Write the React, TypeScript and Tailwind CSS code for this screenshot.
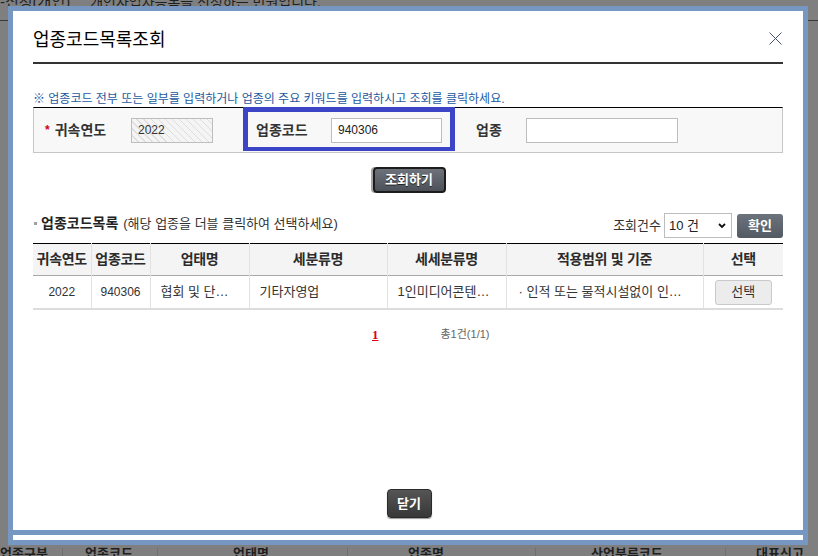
import { useState } from "react";

const font = "font-['Liberation_Sans','Noto_Sans_CJK_KR',sans-serif]";

const columns = [
  { label: "귀속연도", width: 58 },
  { label: "업종코드", width: 59 },
  { label: "업태명", width: 99 },
  { label: "세분류명", width: 138 },
  { label: "세세분류명", width: 119 },
  { label: "적용범위 및 기준", width: 197 },
  { label: "선택", width: 80 },
];

const rows = [
  {
    year: "2022",
    code: "940306",
    bizType: "협회 및 단…",
    subClass: "기타자영업",
    detailClass: "1인미디어콘텐…",
    scope: "· 인적 또는 물적시설없이 인…",
  },
];

function CloseIcon() {
  return (
    <svg width="13" height="13" viewBox="0 0 13 13" className="block">
      <path d="M0.5 0.5L12.5 12.5M12.5 0.5L0.5 12.5" stroke="#4a5070" strokeWidth="1" fill="none" />
    </svg>
  );
}

function BackgroundPage() {
  return (
    <div className="h-full w-full bg-[#7f7f7f] text-[#1f1f1f]">
      <div className="flex h-[21px] items-start gap-5 border-b border-[#3a3a3a] text-[15px] leading-[10px]">
        <span className="-mt-[3px]">-신청(개인)</span>
        <span className="-mt-[3px] text-[14px]">개인사업자등록을 신청하는 민원입니다.</span>
      </div>
      <div className="mt-[527px] flex text-[13px] leading-[12px] font-bold">
        <span className="w-[63px] border-r border-[#6f6f6f]">업종구분</span>
        <span className="w-[95px] border-r border-[#6f6f6f] pl-[22px]">업종코드</span>
        <span className="w-[190px] border-r border-[#6f6f6f] pl-[75px]">업태명</span>
        <span className="w-[188px] border-r border-[#6f6f6f] pl-[60px]">업종명</span>
        <span className="w-[190px] border-r border-[#6f6f6f] pl-[55px]">산업분류코드</span>
        <span className="pl-[30px]">대표신고</span>
      </div>
    </div>
  );
}

export default function App() {
  const [count, setCount] = useState("10");
  const [code, setCode] = useState("940306");
  const [bizName, setBizName] = useState("");

  return (
    <div className={`relative h-[556px] w-[818px] overflow-hidden ${font}`}>
      <BackgroundPage />

      <div className="absolute left-[8px] top-[6px] w-[800px] border-[5px] border-[#7597c1] bg-white">
        <div className="flex h-[519px] flex-col px-[20px]">
          {/* header */}
          <div className="flex items-start justify-between border-b-2 border-[#333] pt-[17px] pb-[10px]">
            <h1 className="text-[18px] leading-[24px] text-black">업종코드목록조회</h1>
            <button className="mt-[4px] mr-[1px]">
              <CloseIcon />
            </button>
          </div>

          <p className="mt-[27px] text-[12px] leading-[16px] text-[#1a5aa0]">
            ※ 업종코드 전부 또는 일부를 입력하거나 업종의 주요 키워드를 입력하시고 조회를 클릭하세요.
          </p>

          {/* search box */}
          <div className="relative flex h-[46px] items-center border border-t-black border-x-[#c6c6c6] border-b-[#c6c6c6] bg-[#f8f8f8] pl-[11px] text-[14px] text-[#333]">
            <div className="flex w-[86px] items-center">
              <span className="mr-[5px] text-[12px] font-bold text-[#d0021b]">*</span>
              <span className="font-bold">귀속연도</span>
            </div>
            <div className="flex h-[25px] w-[82px] items-center border border-[#bdbdbd] bg-[repeating-linear-gradient(45deg,#f4f4f4_0px,#f4f4f4_4px,#dedede_4px,#dedede_5px)] px-[6px] text-[12px] text-[#333]">
              2022
            </div>
            <span className="ml-[43px] w-[75px] font-bold">업종코드</span>
            <input
              value={code}
              onChange={(e) => setCode(e.target.value)}
              className="h-[25px] w-[111px] border border-[#bdbdbd] bg-white px-[6px] text-[12px] text-[#222] outline-none"
            />
            <span className="ml-[34px] w-[50px] font-bold">업종</span>
            <input
              value={bizName}
              onChange={(e) => setBizName(e.target.value)}
              className="h-[25px] w-[152px] border border-[#bdbdbd] bg-white px-[6px] text-[12px] outline-none"
            />
            {/* highlight */}
            <div className="pointer-events-none absolute left-[209px] top-[-1px] h-[44px] w-[212px] border-[5px] border-b-[4px] border-[#3c45c6]" />
          </div>

          <div className="mt-[14px] flex justify-center pl-[2px]">
            <button className="h-[26px] w-[73px] rounded-[4px] border-2 border-[#1c1c1c] bg-gradient-to-b from-[#6d727b] to-[#4d525a] text-[13px] font-bold text-white shadow-[-2px_0_0_#a5a5a5] [text-shadow:0_1px_0_#222]">
              조회하기
            </button>
          </div>

          {/* list header */}
          <div className="mt-[20px] flex items-center justify-between">
            <div className="-mt-[4px] flex items-center text-[#222]">
              <span className="ml-[1px] mr-[4px] h-[3px] w-[3px] bg-[#a0a0a0]" />
              <span className="text-[14px] font-bold">업종코드목록</span>
              <span className="ml-[5px] text-[13px] text-[#333]">(해당 업종을 더블 클릭하여 선택하세요)</span>
            </div>
            <div className="flex items-center">
              <span className="mr-[3px] text-[13px] text-[#333]">조회건수</span>
              <div className="relative">
                <select
                  value={count}
                  onChange={(e) => setCount(e.target.value)}
                  className="h-[25px] w-[68px] appearance-none border border-[#bdbdbd] bg-white pl-[4px] text-[13px] text-[#222] outline-none"
                >
                  <option value="10">10 건</option>
                  <option value="20">20 건</option>
                  <option value="50">50 건</option>
                </select>
                <svg
                  width="8"
                  height="6"
                  viewBox="0 0 8 6"
                  className="pointer-events-none absolute right-[6px] top-[10px]"
                >
                  <path d="M1 1L4 4L7 1" stroke="#111" strokeWidth="1.8" fill="none" />
                </svg>
              </div>
              <button className="ml-[5px] h-[24px] w-[46px] rounded-[3px] bg-gradient-to-b from-[#6c737d] to-[#535a63] text-[13px] font-bold text-white">
                확인
              </button>
            </div>
          </div>

          {/* table */}
          <table className="mt-[5px] w-full table-fixed border-collapse border-t border-black text-[#333]">
            <colgroup>
              {columns.map((c) => (
                <col key={c.label} style={{ width: c.width }} />
              ))}
            </colgroup>
            <thead>
              <tr className="h-[32px] border-b border-[#a9a9a9] bg-[#f4f4f4]">
                {columns.map((c, i) => (
                  <th
                    key={c.label}
                    className={`p-0 text-center text-[14px] font-bold tracking-[-0.3px] text-[#2b2b2b] ${
                      i > 0 ? "border-l border-[#e2e2e2]" : ""
                    }`}
                  >
                    {c.label}
                  </th>
                ))}
              </tr>
            </thead>
            <tbody>
              {rows.map((r) => (
                <tr key={r.code} className="h-[33px] border-b-2 border-[#dcdcdc] text-[13px]">
                  <td className="p-0 text-center text-[12px]">{r.year}</td>
                  <td className="border-l border-[#e2e2e2] p-0 text-center text-[12px]">{r.code}</td>
                  <td className="truncate border-l border-[#e2e2e2] py-0 pl-[10px]">{r.bizType}</td>
                  <td className="truncate border-l border-[#e2e2e2] py-0 pl-[10px]">{r.subClass}</td>
                  <td className="truncate border-l border-[#e2e2e2] py-0 pl-[10px]">{r.detailClass}</td>
                  <td className="truncate border-l border-[#e2e2e2] py-0 pl-[12px]">{r.scope}</td>
                  <td className="border-l border-[#e2e2e2] p-0 text-center">
                    <button className="h-[25px] w-[57px] rounded-[3px] border border-[#c9c9c9] bg-[#ececec] text-[13px] text-[#333]">
                      선택
                    </button>
                  </td>
                </tr>
              ))}
            </tbody>
          </table>

          {/* paging */}
          <div className="mt-[15px] flex items-center">
            <a className="ml-[339px] font-['Liberation_Serif',serif] text-[13px] font-bold text-[#e0001b] underline">
              1
            </a>
            <span className="ml-[62px] text-[11px] text-[#666]">총1건(1/1)</span>
          </div>

          <div className="mt-auto flex justify-center pb-[12px] pl-[2px]">
            <button className="h-[29px] w-[45px] rounded-[4px] border border-[#2a2a2a] bg-gradient-to-b from-[#555] to-[#383838] text-[13px] font-bold text-white shadow-[0_1px_1px_#999]">
              닫기
            </button>
          </div>
        </div>
        <div className="h-[5px] bg-[#7597c1]" />
        <div className="h-[5px] bg-white" />
      </div>
    </div>
  );
}
